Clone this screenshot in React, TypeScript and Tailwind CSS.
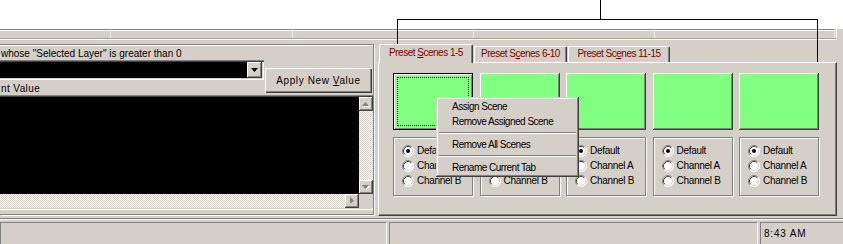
const raised =
  "shadow-[inset_-1px_-1px_0_#404040,inset_1px_1px_0_#fff,inset_-2px_-2px_0_#808080]";
const sunken =
  "shadow-[inset_1px_1px_0_#808080,inset_2px_2px_0_#404040,inset_-1px_-1px_0_#fff,inset_-2px_-2px_0_#d4d0c8]";
const checker =
  "bg-[conic-gradient(#fff_25%,#d4d0c8_0_50%,#fff_0_75%,#d4d0c8_0)] bg-[length:2px_2px]";

function Radio({ checked }: { checked?: boolean }) {
  return (
    <svg width="12" height="12" viewBox="0 0 12 12" className="shrink-0">
      <circle cx="6" cy="6" r="5.5" fill="#fff" />
      <path d="M2.11 9.89A5.5 5.5 0 0 1 9.89 2.11" fill="none" stroke="#808080" />
      <path d="M9.89 2.11A5.5 5.5 0 0 1 2.11 9.89" fill="none" stroke="#fff" />
      <path d="M2.82 9.18A4.5 4.5 0 0 1 9.18 2.82" fill="none" stroke="#404040" />
      <path d="M9.18 2.82A4.5 4.5 0 0 1 2.82 9.18" fill="none" stroke="#d4d0c8" />
      {checked && <circle cx="6" cy="6" r="2" fill="#000" />}
    </svg>
  );
}

function ScrollBtn({ dir }: { dir: "up" | "down" | "right" }) {
  const pts =
    dir === "up" ? "3.5,0 7,4 0,4" : dir === "down" ? "0,0 7,0 3.5,4" : "0,0 4,3.5 0,7";
  const size = dir === "right" ? [4, 7] : [7, 4];
  return (
    <div className={`w-[14px] h-[14px] bg-[#d4d0c8] flex items-center justify-center shrink-0 ${raised}`}>
      <svg width={size[0] + 1} height={size[1] + 1} viewBox={`0 0 ${size[0] + 1} ${size[1] + 1}`}>
        {dir !== "right" && <polygon points={pts} fill="#fff" transform="translate(1,1)" />}
        <polygon points={pts} fill="#808080" />
      </svg>
    </div>
  );
}

function Scene({ focused }: { focused?: boolean }) {
  return (
    <div className="flex flex-col gap-[7px] w-[80px]">
      {focused ? (
        <div className="relative h-[57px] bg-[#80ff80] border border-black shadow-[inset_1px_1px_0_#fff,inset_-1px_-1px_0_#808080]">
          <div className="absolute inset-[3px] border border-dotted border-black" />
        </div>
      ) : (
        <div className={`h-[57px] bg-[#80ff80] ${raised}`} />
      )}
      <div className="w-[80px] h-[59px] border border-[#808080] shadow-[1px_1px_0_#fff,inset_1px_1px_0_#fff] pt-[5px] pl-[8px]">
        {["Default", "Channel A", "Channel B"].map((t, i) => (
          <div key={t} className="h-[15px] flex items-center gap-[3px]">
            <Radio checked={i === 0} />
            <span className="tracking-[-0.3px]">{t}</span>
          </div>
        ))}
      </div>
    </div>
  );
}

function Tab({
  pre,
  u,
  post,
  w,
  active,
}: {
  pre: string;
  u: string;
  post: string;
  w: string;
  active?: boolean;
}) {
  return (
    <div
      className={`${w} ${active ? "h-[19px] -mb-[1px] relative z-10 pb-[3px]" : "h-[16px] pb-[1px]"} bg-[#d4d0c8] border-t border-l border-white border-r border-r-[#404040] shadow-[inset_-1px_0_0_#808080] rounded-t-[2px] flex items-center justify-center text-[#800000] tracking-[-0.5px]`}
    >
      <span className="whitespace-pre">
        {pre}
        <span className="underline underline-offset-[1px]">{u}</span>
        {post}
      </span>
    </div>
  );
}

export default function App() {
  return (
    <div className="relative w-[843px] h-[244px] overflow-hidden bg-white text-[10px] leading-none text-black font-['Liberation_Sans',Arial,sans-serif]">
      <div className="h-[29px]" />
      <div className="h-[215px] bg-[#d4d0c8] flex flex-col">
        {/* band */}
        <div className="h-[15px] w-[837px] flex flex-col">
          <div className="flex h-[9px] border-r border-white">
            {[111, 182, 181, 181, 180].map((w, i) => (
              <div
                key={i}
                style={{ width: w }}
                className="h-[9px] border-t border-[#808080] shadow-[inset_0_1px_0_#fff] border-r border-r-[#ebe9e4]"
              />
            ))}
          </div>
          <div className="h-[2px] border-t border-[#a8a49c] border-b border-b-white" />
        </div>

        <div className="flex gap-[4px] h-[172px]">
          {/* left panel */}
          <div className="w-[374px] h-[171px] border-t border-r border-b border-[#808080] shadow-[1px_1px_0_#fff,inset_0_1px_0_#fff] flex flex-col">
            <div className="h-[15px] pt-[3px] leading-[12px] whitespace-nowrap pl-[1px]">
              whose "Selected Layer" is greater than 0
            </div>
            <div className="flex h-[35px]">
              <div className="w-[264px] flex flex-col">
                <div className={`-ml-[2px] w-[266px] h-[20px] bg-black p-[2px] flex justify-end ${sunken}`}>
                  <div className={`w-[15px] h-[16px] bg-[#d4d0c8] flex items-center justify-center ${raised}`}>
                    <svg width="7" height="4" viewBox="0 0 7 4">
                      <polygon points="0,0 7,0 3.5,4" fill="#000" />
                    </svg>
                  </div>
                </div>
                <div className="pt-[3px] leading-[12px] tracking-[0.4px] pl-[1px]">nt Value</div>
              </div>
              <div className="ml-[1px] mt-[8px] w-[107px] h-[25px] flex items-center justify-center tracking-[0.6px] shadow-[inset_1px_1px_0_#fff,inset_-1px_-1px_0_#404040,inset_-2px_-2px_0_#808080]">
                <span className="whitespace-pre">
                  Apply New <span className="underline underline-offset-[1px]">V</span>alue
                </span>
              </div>
            </div>
            <div className={`-ml-[2px] w-[375px] h-[115px] pt-[2px] pl-[2px] pb-[2px] ${sunken}`}>
              <div className="flex h-[97px]">
                <div className="flex-1 bg-black" />
                <div className={`w-[14px] flex flex-col justify-between ${checker}`}>
                  <ScrollBtn dir="up" />
                  <ScrollBtn dir="down" />
                </div>
              </div>
              <div className="flex h-[14px]">
                <div className={`flex-1 flex justify-end ${checker}`}>
                  <ScrollBtn dir="right" />
                </div>
                <div className="w-[14px] bg-[#d4d0c8]" />
              </div>
            </div>
          </div>

          {/* tab control */}
          <div className="w-[459px] flex flex-col">
            <div className="h-[18px] flex items-end gap-[1px] pl-[1px]">
              <Tab pre="Preset " u="S" post="cenes 1-5" w="w-[94px]" active />
              <Tab pre="Preset S" u="c" post="enes 6-10" w="w-[93px]" />
              <Tab pre="Preset Sc" u="e" post="nes 11-15" w="w-[102px]" />
            </div>
            <div className="h-[154px] border-t border-l border-white border-r border-b border-r-[#404040] border-b-[#404040] shadow-[inset_-1px_-1px_0_#808080] pt-[10px] pl-[14px] flex gap-[6.5px]">
              <Scene focused />
              <Scene />
              <Scene />
              <Scene />
              <Scene />
            </div>
          </div>
        </div>

        <div className="h-[2px] mt-[2px] border-t border-[#808080] border-b border-b-white" />
        <div className="h-[2px]" />
        <div className="flex gap-[2px] h-[22px]">
          <div className="w-[387px] border-t border-l border-[#808080] border-r border-r-white" />
          <div className="w-[369px] border-t border-l border-[#808080] border-r border-r-white" />
          <div className="flex-1 border-t border-l border-[#808080] flex items-center pl-[3px] tracking-[0.8px]">
            8:43 AM
          </div>
        </div>
      </div>

      {/* context menu */}
      <div className="absolute left-[436px] top-[97px] w-[143px] h-[80px] bg-[#d4d0c8] shadow-[inset_-1px_-1px_0_#404040,inset_1px_1px_0_#d4d0c8,inset_-2px_-2px_0_#808080,inset_2px_2px_0_#fff] pt-[2px] px-[2px] tracking-[-0.5px]">
        <div className="h-[15px] flex items-center pl-[14px]">Assign Scene</div>
        <div className="h-[15px] flex items-center pl-[14px]">Remove Assigned Scene</div>
        <div className="h-[8px] flex items-center px-[1px]">
          <div className="w-full h-[2px] border-t border-[#808080] border-b border-b-white" />
        </div>
        <div className="h-[15px] flex items-center pl-[14px]">Remove All Scenes</div>
        <div className="h-[8px] flex items-center px-[1px]">
          <div className="w-full h-[2px] border-t border-[#808080] border-b border-b-white" />
        </div>
        <div className="h-[15px] flex items-center pl-[14px]">Rename Current Tab</div>
      </div>

      {/* callout lines */}
      <div className="absolute left-[600px] top-0 w-px h-[20px] bg-black" />
      <div className="absolute left-[397px] top-[19px] w-[421px] h-px bg-black" />
      <div className="absolute left-[397px] top-[19px] w-px h-[40px] bg-black" />
      <div className="absolute left-[817px] top-[19px] w-px h-[43px] bg-black" />
    </div>
  );
}
